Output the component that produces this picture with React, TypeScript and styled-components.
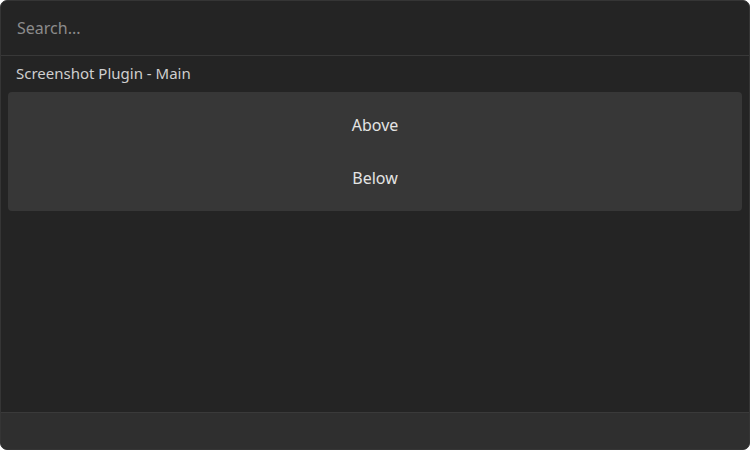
import styled, { createGlobalStyle } from 'styled-components'

const Global = createGlobalStyle`
  html, body {
    margin: 0;
    padding: 0;
    background: #ffffff;
  }
  body {
    font-family: "Noto Sans", "Open Sans", sans-serif;
  }
`

const Window = styled.div`
  box-sizing: border-box;
  width: 750px;
  height: 450px;
  display: flex;
  flex-direction: column;
  background: #242424;
  border: 1px solid #353535;
  border-radius: 7px;
  overflow: hidden;
`

const SearchBar = styled.div`
  height: 54px;
  display: flex;
  align-items: center;
  padding: 0 16px;
  border-bottom: 1px solid #383838;
`

const SearchInput = styled.input`
  flex: 1;
  background: transparent;
  border: none;
  outline: none;
  font-family: inherit;
  font-size: 16px;
  color: #e0e0e0;
  padding: 0;

  &::placeholder {
    color: #8c8c8c;
  }
`

const SectionLabel = styled.div`
  padding: 7px 15px 9px;
  line-height: 20px;
  font-size: 15px;
  color: #cfcfcf;
`

const List = styled.div`
  margin: 0 7px;
  padding: 6px 0 7px;
  background: #373737;
  border-radius: 4px;
  display: flex;
  flex-direction: column;
`

const Item = styled.div`
  height: 53px;
  display: flex;
  align-items: center;
  justify-content: center;
  font-size: 16px;
  color: #e4e4e4;
`

const Spacer = styled.div`
  flex: 1;
`

const Footer = styled.div`
  height: 36px;
  background: #2f2f2f;
  border-top: 1px solid #3a3a3a;
`

export default function App() {
  return (
    <>
      <Global />
      <Window>
        <SearchBar>
          <SearchInput placeholder="Search..." />
        </SearchBar>
        <SectionLabel>Screenshot Plugin - Main</SectionLabel>
        <List>
          <Item>Above</Item>
          <Item>Below</Item>
        </List>
        <Spacer />
        <Footer />
      </Window>
    </>
  )
}
